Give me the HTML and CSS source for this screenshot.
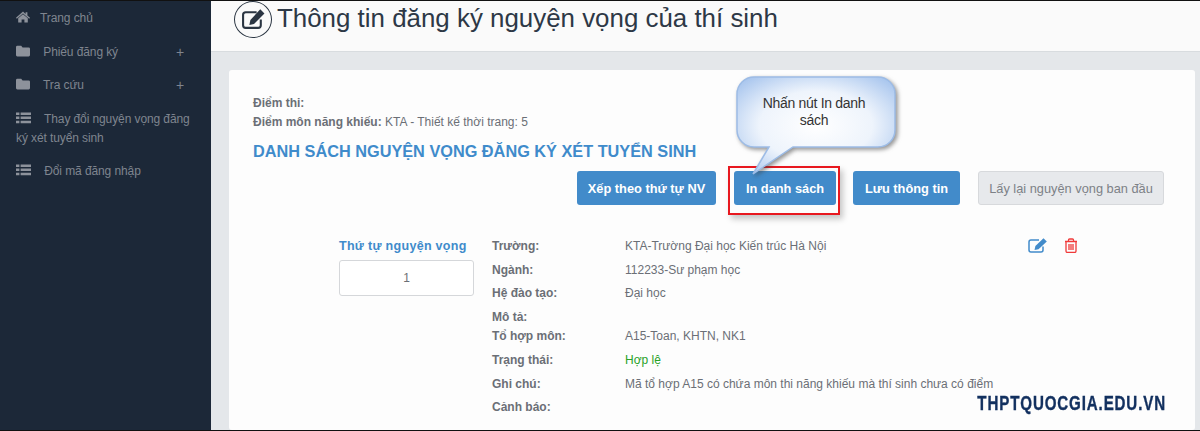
FILE: index.html
```html
<!DOCTYPE html>
<html lang="vi">
<head>
<meta charset="utf-8">
<title>Thông tin đăng ký nguyện vọng của thí sinh</title>
<link rel="stylesheet" href="styles.css">
</head>
<body>
<div class="page">
  <aside class="sidebar">
    <a class="nav-item home">
      <svg class="nav-icon" viewBox="0 0 14 12"><path d="M7 0.6 L9.6 2.9V1.2H11.4V4.5L14 6.8 13.2 7.7 7 2.4 0.8 7.7 0 6.8Z M2.2 7.2 7 3.2 11.8 7.2V11.6H8.4V8.4H5.6V11.6H2.2Z"/></svg>
      <span>Trang chủ</span>
    </a>
    <a class="nav-item has-sub">
      <svg class="nav-icon" viewBox="0 0 14 12"><path d="M1.5 0.8H5.2L6.6 2.4H12.5A1.4 1.4 0 0 1 14 3.8V10A1.4 1.4 0 0 1 12.5 11.4H1.5A1.4 1.4 0 0 1 0 10V2.2A1.4 1.4 0 0 1 1.5 0.8Z"/></svg>
      <span>Phiếu đăng ký</span><b class="plus">+</b>
    </a>
    <a class="nav-item has-sub">
      <svg class="nav-icon" viewBox="0 0 14 12"><path d="M1.5 0.8H5.2L6.6 2.4H12.5A1.4 1.4 0 0 1 14 3.8V10A1.4 1.4 0 0 1 12.5 11.4H1.5A1.4 1.4 0 0 1 0 10V2.2A1.4 1.4 0 0 1 1.5 0.8Z"/></svg>
      <span>Tra cứu</span><b class="plus">+</b>
    </a>
    <a class="nav-item wrap">
      <svg class="nav-icon list" viewBox="0 0 15 12"><path d="M0 0.5H3.4V3H0ZM4.6 0.5H15V3H4.6ZM0 4.6H3.4V7.1H0ZM4.6 4.6H15V7.1H4.6ZM0 8.7H3.4V11.2H0ZM4.6 8.7H15V11.2H4.6Z"/></svg>
      Thay đổi nguyện vọng đăng ký xét tuyển sinh
    </a>
    <a class="nav-item wrap">
      <svg class="nav-icon list" viewBox="0 0 15 12"><path d="M0 0.5H3.4V3H0ZM4.6 0.5H15V3H4.6ZM0 4.6H3.4V7.1H0ZM4.6 4.6H15V7.1H4.6ZM0 8.7H3.4V11.2H0ZM4.6 8.7H15V11.2H4.6Z"/></svg>
      Đổi mã đăng nhập
    </a>
  </aside>

  <main class="main">
    <header class="page-head">
      <span class="head-icon">
        <svg viewBox="0 0 24 22" width="25" height="23"><path class="head-box" d="M15 4H4.5A2.5 2.5 0 0 0 2 6.500V16.500A2.500 2.500 0 0 0 4.500 19H16.500A2.500 2.500 0 0 0 19 16.500V11"/><path class="head-pen" d="M18.500 1.200 22.500 5.200 12.500 15.200 8 16.200 9 11.500Z"/></svg>
      </span>
      <h1>Thông tin đăng ký nguyện vọng của thí sinh</h1>
    </header>

    <section class="content">
      <div class="card">
        <p class="score"><b>Điểm thi:</b></p>
        <p class="score"><b>Điểm môn năng khiếu:</b> KTA - Thiết kế thời trang: 5</p>
        <h2>DANH SÁCH NGUYỆN VỌNG ĐĂNG KÝ XÉT TUYỂN SINH</h2>

        <div class="actions">
          <button class="btn primary">Xếp theo thứ tự NV</button>
          <span class="print-wrap">
            <button class="btn primary">In danh sách</button>
            <span class="highlight"></span>
            <span class="callout">
              <svg class="callout-shape" viewBox="0 0 160 100" width="160" height="100">
                <defs>
                  <radialGradient id="bubble" cx="50%" cy="50%" r="65%">
                    <stop offset="0" stop-color="#ffffff"/>
                    <stop offset="0.55" stop-color="#eef4fc"/>
                    <stop offset="1" stop-color="#a9c6ee"/>
                  </radialGradient>
                </defs>
                <path d="M18 1H142A17 17 0 0 1 159 18V54A17 17 0 0 1 142 71H57L17 98 33 71H18A17 17 0 0 1 1 54V18A17 17 0 0 1 18 1Z" fill="url(#bubble)" stroke="#9dbce6" stroke-width="1.500"/>
              </svg>
              <span class="callout-text">Nhấn nút In danh sách</span>
            </span>
          </span>
          <button class="btn primary">Lưu thông tin</button>
          <button class="btn muted">Lấy lại nguyện vọng ban đầu</button>
        </div>

        <div class="wish">
          <div class="order">
            <label>Thứ tự nguyện vọng</label>
            <div class="order-box">1</div>
          </div>
          <dl class="info">
            <dt>Trường:</dt><dd>KTA-Trường Đại học Kiến trúc Hà Nội</dd>
            <dt>Ngành:</dt><dd>112233-Sư phạm học</dd>
            <dt>Hệ đào tạo:</dt><dd>Đại học</dd>
            <dt>Mô tả:</dt><dd></dd>
            <dt>Tổ hợp môn:</dt><dd>A15-Toan, KHTN, NK1</dd>
            <dt>Trạng thái:</dt><dd class="ok">Hợp lệ</dd>
            <dt>Ghi chú:</dt><dd>Mã tổ hợp A15 có chứa môn thi năng khiếu mà thí sinh chưa có điểm</dd>
            <dt>Cảnh báo:</dt><dd></dd>
          </dl>
          <div class="row-icons">
            <svg class="edit" viewBox="0 0 19 15" width="19" height="15"><path class="edit-box" d="M11 2H3A2 2 0 0 0 1 4V12A2 2 0 0 0 3 14H13A2 2 0 0 0 15 12V8.500"/><path class="edit-pen" d="M15.500 0.300 18.800 3.400 10.500 11.200 6.500 12 7.400 8Z"/></svg>
            <svg class="trash" viewBox="0 0 14 15" width="14" height="15"><path d="M1 3.500H13M4.500 3.500V2A1 1 0 0 1 5.500 1H8.500A1 1 0 0 1 9.500 2V3.500M2 3.500V13A1.500 1.500 0 0 0 3.500 14.500H10.500A1.500 1.500 0 0 0 12 13V3.500M5 6V12M7 6V12M9 6V12"/></svg>
          </div>
        </div>
        <div class="watermark">THPTQUOCGIA.EDU.VN</div>
      </div>
    </section>
  </main>
</div>
</body>
</html>
```
FILE: styles.css
```css
* { box-sizing: border-box; }
html, body { margin: 0; height: 100%; overflow: hidden; }
body { font-family: "Liberation Sans", Arial, sans-serif; font-size: 12px; color: #6b6f76; background: #e4e7ea; }
.page { display: flex; height: 431px; border-top: 1px solid #111; border-bottom: 1px solid #111; overflow: hidden; }

.sidebar { flex: 0 0 211px; background: #1c2838; color: #7f858f; padding-top: 1px; }
.nav-item { display: block; position: relative; padding: 7px 8px 7.500px 16px; line-height: 19px; font-size: 12px; letter-spacing: -0.1px; }
.nav-icon { width: 14px; height: 12px; fill: #8d929b; margin-right: 7px; vertical-align: -1px; }
.nav-item.has-sub .nav-icon { margin-right: 10px; }
.nav-icon.list { width: 15px; margin-right: 10px; }
.plus { position: absolute; left: 176px; top: 7px; font-weight: 400; font-size: 14px; }

.main { flex: 1; display: flex; flex-direction: column; min-width: 0; }
.page-head { flex: 0 0 51px; display: flex; align-items: flex-start; gap: 5px; padding-left: 23px; background: #fafafa; border-bottom: 1px solid #d8dcdf; }
.head-icon { width: 38px; height: 37px; display: flex; align-items: center; justify-content: center; border: 1.500px solid #2a3542; border-radius: 50%; }
.head-box { fill: none; stroke: #2a3542; stroke-width: 2; }
.head-pen { fill: #2a3542; }
h1 { margin: 0; font-size: 25.900px; font-weight: 400; line-height: 35px; color: #2d3846; white-space: nowrap; }

.content { flex: 1; padding: 18px 5px 0 18px; }
.card { position: relative; height: 100%; background: #fdfdfd; border-radius: 3px; padding: 24px 31px 0 24px; }
.score { margin: 0; line-height: 19px; }
.score b { font-weight: 700; }
h2 { margin: 9px 0 0; font-size: 16.300px; line-height: 20px; font-weight: 700; color: #3f8bcb; white-space: nowrap; }
.actions { display: flex; justify-content: flex-end; gap: 17px; margin-top: 10px; }
.btn { height: 34px; padding: 0; border: 1px solid transparent; border-radius: 3px; font-family: inherit; font-size: 12.800px; }
.primary { background: #428bca; color: #fff; font-weight: 700; }
.actions > .primary:first-child { width: 139px; }
.print-wrap { position: relative; display: block; width: 102px; margin-left: 1px; }
.print-wrap .btn { width: 102px; }
.actions > .btn:nth-child(3) { width: 107px; }
.muted { width: 186px; margin-left: 1px; background: #e7e9ec; border-color: #d7d9dc; color: #7d8187; }
.highlight { position: absolute; left: -6px; top: -5px; width: 112px; height: 49px; border: 2px solid #e8181f; box-shadow: 3px 4px 6px rgba(0,0,0,.22); }
.callout { position: absolute; left: 2px; top: -95px; width: 160px; height: 100px; }
.callout-shape { display: block; filter: drop-shadow(2px 2px 2px rgba(60,60,60,.55)); }
.callout-text { position: absolute; left: 18px; top: 19px; width: 120px; text-align: center; line-height: 17px; font-size: 14px; letter-spacing: -0.3px; color: #333; }

.wish { display: flex; align-items: flex-start; margin: 32px 0 0 86px; }
.order { width: 135px; margin-right: 18px; }
.order label { display: block; font-weight: 700; font-size: 12.500px; line-height: 19px; color: #3f8bcb; letter-spacing: 0.3px; }
.order-box { height: 36px; margin-top: 4px; border: 1px solid #d5d7da; border-radius: 3px; background: #fff; text-align: center; line-height: 34px; }
.info { display: grid; grid-template-columns: 133px 403px; grid-template-rows: 23.500px 23.500px 23.500px 19px 24px 24px 23.500px 23.500px; margin: 0; line-height: 19px; }
.info dt { font-weight: 700; }
.info dd { margin: 0; white-space: nowrap; }
.info .ok { color: #28a228; }
.row-icons { display: flex; gap: 17px; margin-top: 1px; }
.edit-box { fill: none; stroke: #428bca; stroke-width: 1.500; }
.edit-pen { fill: #428bca; }
.trash { fill: none; stroke: #f03a3a; stroke-width: 1.300; }
.watermark { position: absolute; right: 29px; bottom: 15px; font-weight: 700; font-size: 21px; letter-spacing: 1.200px; line-height: 24px; color: #12305f; -webkit-text-stroke: 0.4px #12305f; white-space: nowrap; transform: scaleX(0.72); transform-origin: right center; }
```
